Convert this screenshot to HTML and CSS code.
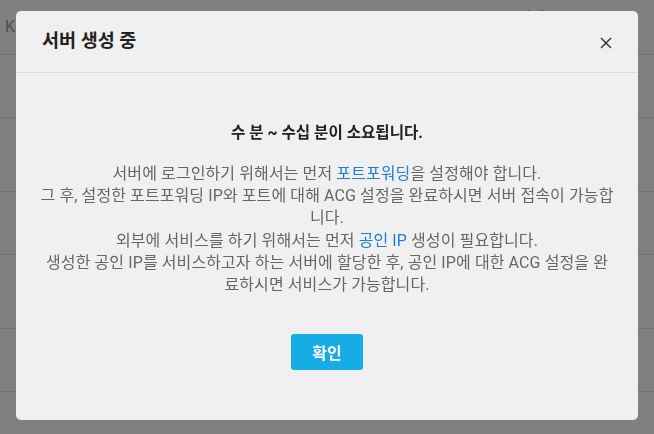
FILE: index.html
```html
<!DOCTYPE html>
<html lang="ko">
<head>
<meta charset="utf-8">
<link rel="stylesheet" href="styles.css">
</head>
<body>
<div class="page">
  <div class="row row-head"><span class="cell-left">KR</span><span class="cell-right">상태</span></div>
  <div class="row r63"></div>
  <div class="row r74"></div>
  <div class="row r63"></div>
  <div class="row r74"></div>
  <div class="row r63"></div>
</div>
<div class="modal">
  <div class="modal-header">
    <h2 class="modal-title">서버 생성 중</h2>
    <button class="close" aria-label="닫기">
      <svg width="12" height="12" viewBox="0 0 12 12"><path d="M1 1 L11 11 M11 1 L1 11" stroke="#3a3a3a" stroke-width="1.5" fill="none"/></svg>
    </button>
  </div>
  <div class="modal-body">
    <p class="lead">수 분 ~ 수십 분이 소요됩니다.</p>
    <p class="desc">서버에 로그인하기 위해서는 먼저 <a class="link">포트포워딩</a>을 설정해야 합니다.<br>그 후, 설정한 포트포워딩 IP와 포트에 대해 ACG 설정을 완료하시면 서버 접속이 가능합니다.<br>외부에 서비스를 하기 위해서는 먼저 <a class="link">공인 IP</a> 생성이 필요합니다.<br>생성한 공인 IP를 서비스하고자 하는 서버에 할당한 후, 공인 IP에 대한 ACG 설정을 완료하시면 서비스가 가능합니다.</p>
    <div class="actions"><button class="btn">확인</button></div>
  </div>
</div>
</body>
</html>
```
FILE: styles.css
```css
html, body {
  margin: 0;
  padding: 0;
}
body {
  background: #808080;
  width: 654px;
  height: 434px;
  overflow: hidden;
  font-family: Roboto, "Noto Sans CJK KR", sans-serif;
}
.page {
  display: flex;
  flex-direction: column;
}
.row {
  border-bottom: 1px solid #717171;
  box-sizing: border-box;
}
.row-head {
  height: 55px;
  display: flex;
  justify-content: space-between;
  align-items: flex-start;
  padding: 18px 0 0 5px;
  color: #4f4f4f;
  font-size: 16px;
  line-height: 18px;
}
.cell-right {
  margin-right: 110px;
  margin-top: -10px;
  color: #2b2b2b;
  font-size: 14px;
}
.r63 { height: 63px; }
.r74 { height: 74px; }

.modal {
  position: fixed;
  left: 16px;
  top: 11px;
  width: 622px;
  height: 409px;
  background: #f0f0f0;
  border-radius: 5px;
  display: flex;
  flex-direction: column;
}
.modal-header {
  height: 61px;
  border-bottom: 1px solid #dcdcdc;
  display: flex;
  align-items: center;
  justify-content: space-between;
  padding: 0 26px;
}
.modal-title {
  margin: 0;
  font-size: 18.5px;
  font-weight: 700;
  color: #222;
  line-height: 24px;
  margin-top: -2px;
}
.close {
  border: 0;
  background: none;
  padding: 0;
  width: 12px;
  height: 12px;
  margin-right: 0;
  margin-top: 3px;
  display: flex;
}
.modal-body {
  padding: 49px 24px 0;
  text-align: center;
}
.lead {
  margin: 0;
  font-size: 15.6px;
  font-weight: 700;
  color: #222;
  line-height: 22px;
}
.desc {
  margin: 19px 0 0;
  font-size: 16px;
  letter-spacing: 0.1px;
  color: #666;
  line-height: 22.2px;
}
.link {
  color: #1d7fd6;
  text-decoration: none;
}
.actions {
  margin-top: 38px;
  display: flex;
  justify-content: center;
}
.btn {
  width: 72px;
  height: 36px;
  border: 0;
  border-radius: 3px;
  background: #16ade7;
  color: #fff;
  font-family: Roboto, "Noto Sans CJK KR", sans-serif;
  font-size: 16px;
  font-weight: 700;
  padding: 0;
}
```
